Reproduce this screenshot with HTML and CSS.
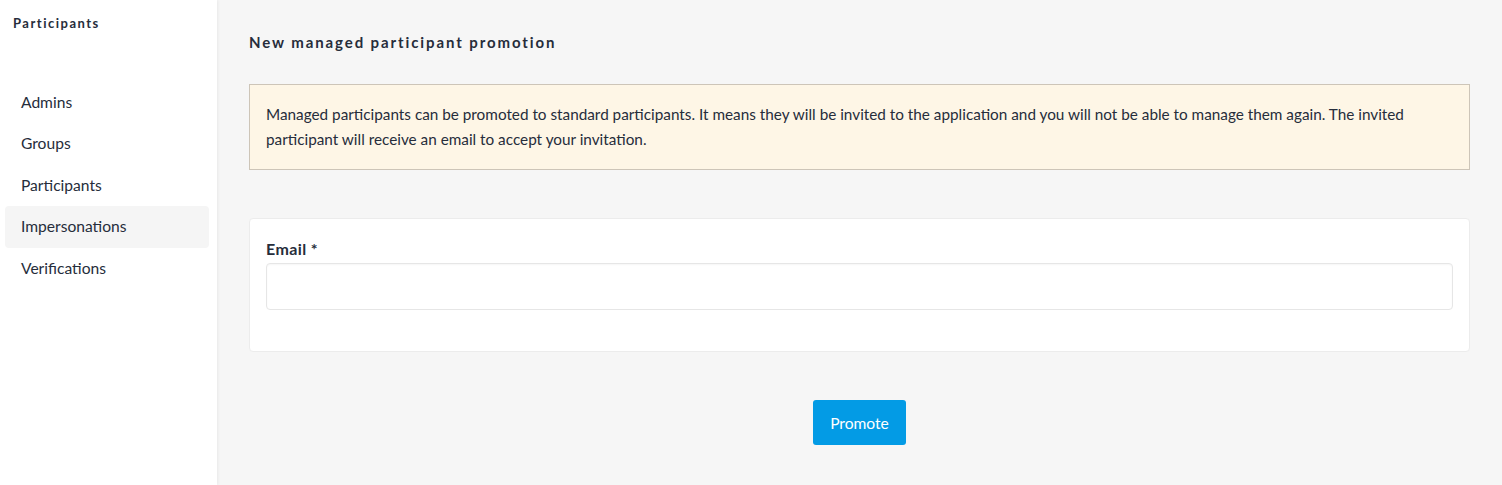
FILE: index.html
```html
<!DOCTYPE html>
<html>
<head>
<meta charset="utf-8">
<link rel="stylesheet" href="styles.css">
</head>
<body>
<div class="layout">
  <aside class="sidebar">
    <div class="sidebar-title">Participants</div>
    <nav class="nav">
      <a class="nav-item">Admins</a>
      <a class="nav-item">Groups</a>
      <a class="nav-item">Participants</a>
      <a class="nav-item active">Impersonations</a>
      <a class="nav-item">Verifications</a>
    </nav>
  </aside>
  <main class="main">
    <h1 class="page-title">New managed participant promotion</h1>
    <div class="notice">Managed participants can be promoted to standard participants. It means they will be invited to the application and you will not be able to manage them again. The invited participant will receive an email to accept your invitation.</div>
    <div class="card">
      <label class="label">Email *</label>
      <input class="input" type="email">
    </div>
    <div class="actions">
      <button class="button">Promote</button>
    </div>
  </main>
</div>
</body>
</html>
```
FILE: styles.css
```css
html, body {
  margin: 0;
  padding: 0;
  height: 100%;
}
body {
  font-family: "Lato", "Open Sans", sans-serif;
  color: #262d3b;
  background: #f6f6f6;
}
.layout {
  display: flex;
  min-height: 485px;
}
.sidebar {
  width: 217px;
  flex-shrink: 0;
  background: #fff;
  box-shadow: 1px 0 3px rgba(0,0,0,0.06);
  padding: 16px 8px 0 5px;
  box-sizing: border-box;
}
.sidebar-title {
  font-size: 13px;
  font-weight: 700;
  letter-spacing: 1.5px;
  padding-left: 8px;
  line-height: 14px;
}
.nav {
  display: flex;
  flex-direction: column;
  margin-top: 51.5px;
}
.nav-item {
  font-size: 15.6px;
  line-height: 41.5px;
  padding-left: 16px;
  border-radius: 4px;
}
.nav-item.active {
  background: #f5f5f5;
}
.main {
  flex: 1;
  padding: 32px 32px 0 32px;
}
.page-title {
  margin: 0;
  font-size: 15px;
  font-weight: 700;
  letter-spacing: 1.9px;
  line-height: 20px;
}
.notice {
  margin-top: 32px;
  background: #fef6e6;
  border: 1px solid #cdc5b8;
  padding: 17px 16px 17px 16px;
  font-size: 15.3px;
  line-height: 25px;
}
.card {
  margin-top: 48px;
  background: #fff;
  border: 1px solid #ececec;
  border-radius: 4px;
  padding: 20px 16px 41px 16px;
  display: flex;
  flex-direction: column;
}
.label {
  font-size: 16px;
  font-weight: 700;
  letter-spacing: 0.4px;
  line-height: 20px;
  margin-bottom: 4px;
}
.input {
  height: 47px;
  box-sizing: border-box;
  border: 1px solid #e6e6e6;
  border-radius: 4px;
  box-shadow: inset 0 1px 2px rgba(0,0,0,0.04);
  background: #fff;
  font-family: inherit;
}
.actions {
  display: flex;
  justify-content: center;
  margin-top: 48px;
}
.button {
  background: #039be5;
  color: #fff;
  border: none;
  border-radius: 3px;
  height: 45px;
  padding: 0 17px;
  font-family: inherit;
  font-size: 15.6px;
}
```
